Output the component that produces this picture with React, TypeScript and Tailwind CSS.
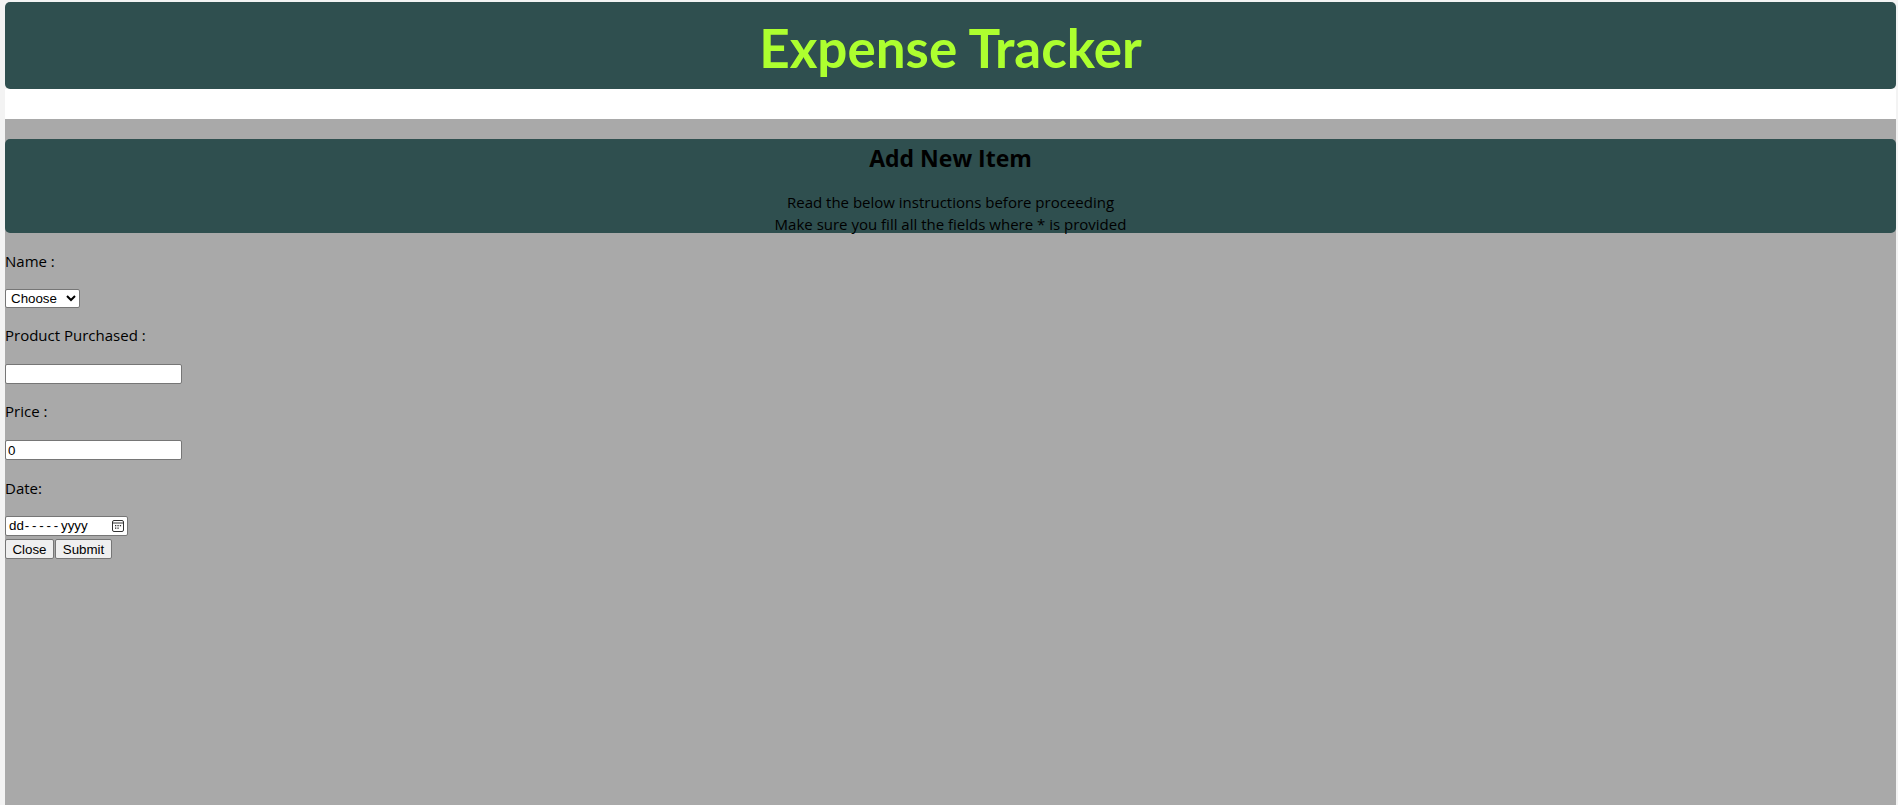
import React from "react";

const seg = { fontFamily: '"Open Sans", "Noto Sans", sans-serif' } as const;
const lato = { fontFamily: 'Lato, "Open Sans", sans-serif' } as const;
const arial = { fontFamily: '"Liberation Sans", Arial, sans-serif' } as const;

function CalIcon() {
  return (
    <svg width="12" height="12" viewBox="0 0 12 12" className="shrink-0">
      <rect x="0.5" y="0.5" width="11" height="11" rx="1.5" fill="none" stroke="#333" strokeWidth="1" />
      <line x1="0.5" y1="3" x2="11.5" y2="3" stroke="#333" strokeWidth="1" />
      <rect x="3" y="5" width="1.3" height="1.3" fill="#333" />
      <rect x="5.4" y="5" width="1.3" height="1.3" fill="#333" />
      <rect x="7.8" y="5" width="1.3" height="1.3" fill="#333" />
      <rect x="3" y="7.5" width="1.3" height="1.3" fill="#333" />
      <rect x="5.4" y="7.5" width="1.3" height="1.3" fill="#333" />
    </svg>
  );
}

export default function App() {
  return (
    <div className="min-h-screen bg-[#f3f3f3] pl-[5px] pr-[2px] pt-[2px]" style={seg}>
      <div className="flex min-h-[803px] flex-col">
        <header className="flex h-[87px] items-center justify-center rounded-[5px] bg-[#2f4f4f]">
          <h1 className="mt-[4px] text-[53px] font-bold leading-none text-[#adff2f]" style={lato}>
            Expense Tracker
          </h1>
        </header>
        <div className="h-[30px] bg-white" />
        <main className="flex-1 bg-[#a9a9a9] pt-[20px] text-[16px] text-black">
          <section className="h-[94px] rounded-[5px] bg-[#2f4f4f] text-center">
            <h2 className="pt-[4px] text-[23px] font-bold leading-[30px]">Add New Item</h2>
            <p className="mt-[18px] text-[15px] leading-[22px]">
              Read the below instructions before proceeding
              <br />
              Make sure you fill all the fields where * is provided
            </p>
          </section>
          <form className="flex flex-col items-start">
            <label className="mt-[18px] text-[15px] leading-[21px]">Name :</label>
            <select
              className="mt-[17px] h-[19px] w-[75px] rounded-[2px] border border-[#767676] bg-white pl-[1px] text-[13.33px] leading-none text-black"
              style={arial}
              defaultValue=""
            >
              <option value="">Choose</option>
              <option value="a">Person A</option>
            </select>
            <label className="mt-[17px] text-[15px] leading-[21px]">Product Purchased :</label>
            <input
              type="text"
              className="mt-[18px] h-[20px] w-[177px] rounded-[2px] border border-[#767676] bg-white px-[2px] text-[13.33px]"
              style={arial}
            />
            <label className="mt-[17px] text-[15px] leading-[21px]">Price :</label>
            <input
              type="text"
              defaultValue="0"
              className="mt-[18px] h-[20px] w-[177px] rounded-[2px] border border-[#767676] bg-white px-[2px] text-[13.33px] text-black"
              style={arial}
            />
            <label className="mt-[18px] text-[15px] leading-[21px]">Date:</label>
            <div
              className="mt-[17px] flex h-[20px] w-[123px] items-center justify-between rounded-[2px] border border-[#767676] bg-white pl-[3px] pr-[3px] text-[13.33px] text-black"
              style={arial}
            >
              <span>
                dd<span className="ml-[1px] tracking-[2.8px]">-----</span>yyyy
              </span>
              <CalIcon />
            </div>
            <div className="mt-[3px] flex gap-[1px]">
              <button
                type="button"
                className="h-[20px] w-[49px] rounded-[2px] border border-[#767676] bg-[#efefef] text-[13.33px] text-black"
                style={arial}
              >
                Close
              </button>
              <button
                type="button"
                className="h-[20px] w-[57px] rounded-[2px] border border-[#767676] bg-[#efefef] text-[13.33px] text-black"
                style={arial}
              >
                Submit
              </button>
            </div>
          </form>
        </main>
      </div>
    </div>
  );
}
